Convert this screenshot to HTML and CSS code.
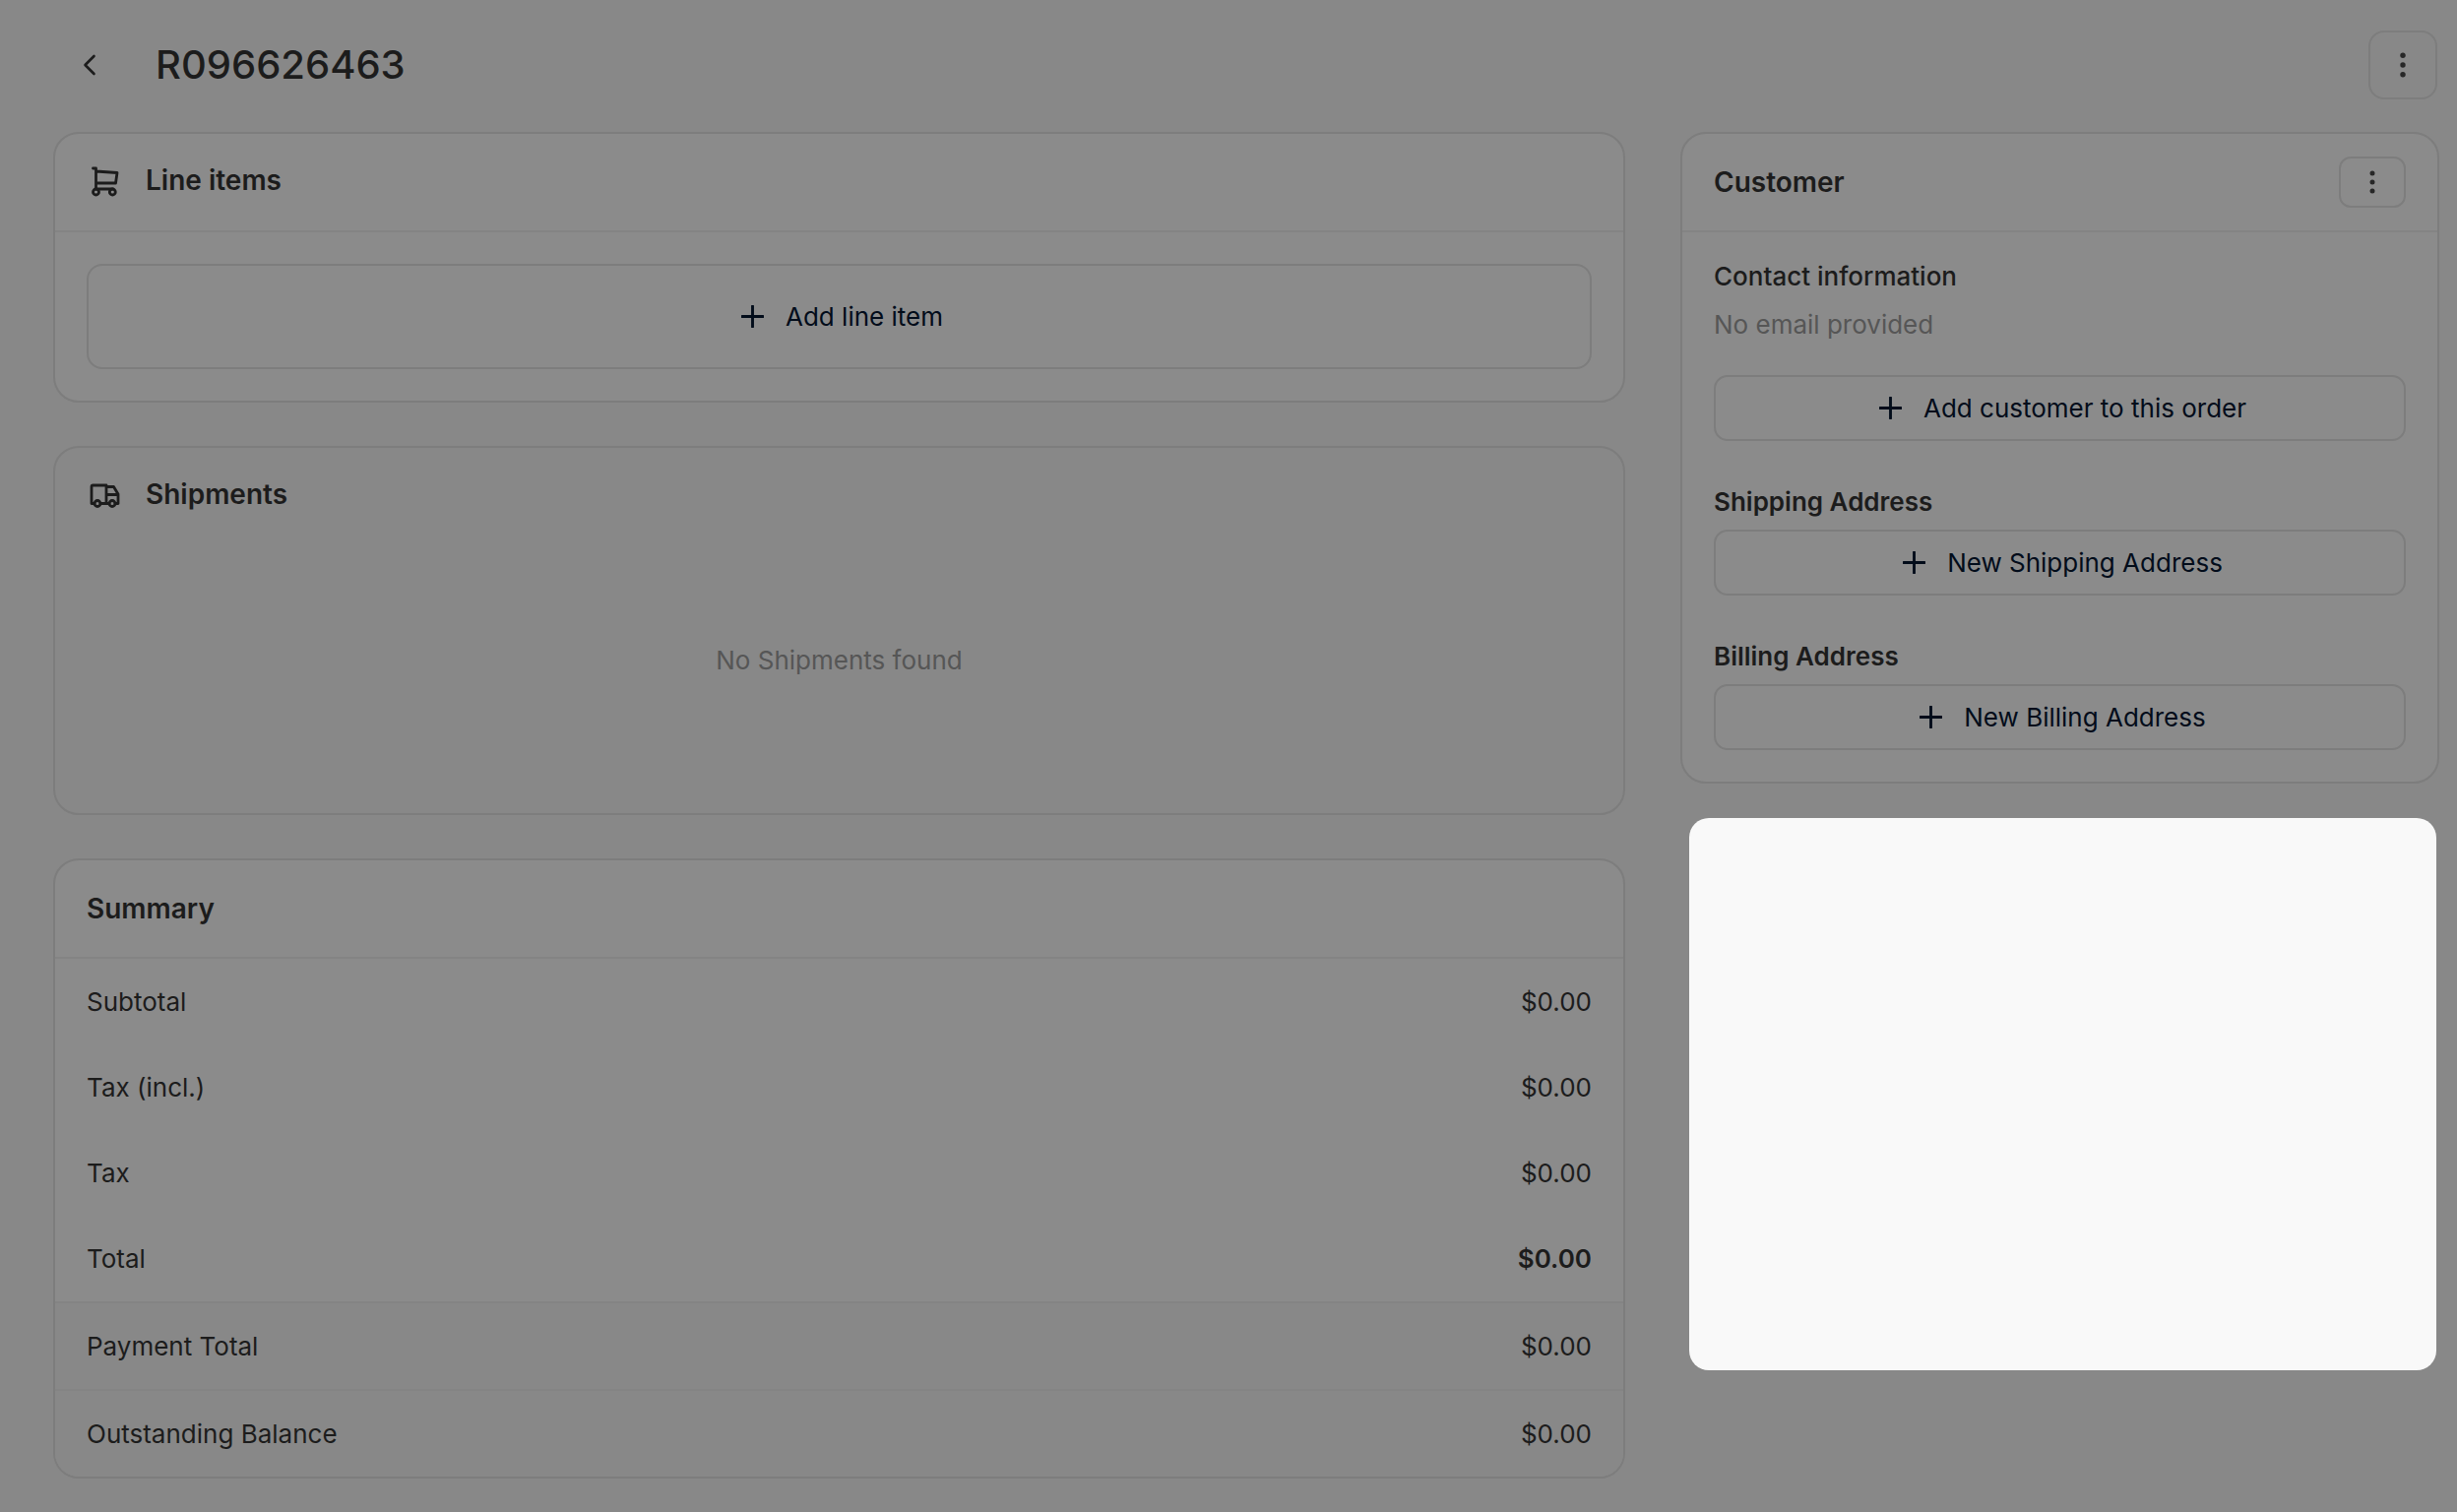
FILE: index.html
```html
<!DOCTYPE html>
<html lang="en">
<head>
<meta charset="utf-8">
<meta name="viewport" content="width=device-width, initial-scale=1">
<title>Order R096626463</title>
<link rel="stylesheet" href="styles.css">
</head>
<body>
<svg class="sprite" aria-hidden="true">
  <symbol id="plus" viewBox="0 0 24 24"><path d="M12 1v22M1 12h22" fill="none" stroke="currentColor" stroke-width="3" stroke-linecap="round"/></symbol>
  <symbol id="dots" viewBox="0 0 24 24"><g fill="currentColor"><circle cx="12" cy="3" r="2.5"/><circle cx="12" cy="12" r="2.5"/><circle cx="12" cy="21" r="2.5"/></g></symbol>
</svg>
<header class="page-header">
  <a class="back" href="#" aria-label="Back to orders">
    <svg width="14" height="22" viewBox="0 0 14 22"><path d="M11.500 2 2.500 11l9 9" fill="none" stroke="currentColor" stroke-width="2.600" stroke-linecap="round" stroke-linejoin="round"/></svg>
  </a>
  <h1 class="page-title">R096626463</h1>
  <button class="menu-button menu-button-large" type="button" aria-label="Order actions"><svg class="dots-large"><use href="#dots"/></svg></button>
</header>
<main class="columns">
  <div class="main-column">
    <section class="card">
      <header class="card-header card-header-icon">
        <svg class="card-icon" viewBox="0 0 36 36" fill="none" stroke="currentColor" stroke-width="2.800" stroke-linecap="round" stroke-linejoin="round"><path d="M6.500 6h3v21h17M9.500 9 31 10.500 29.500 21h-20"/><circle cx="9.500" cy="30" r="3"/><circle cx="26.300" cy="30" r="3"/></svg>
        <h2 class="card-title">Line items</h2>
      </header>
      <div class="card-body">
        <button class="add-button add-button-tall" type="button"><svg class="plus"><use href="#plus"/></svg>Add line item</button>
      </div>
    </section>
    <section class="card card-muted">
      <header class="card-header card-header-icon card-header-plain">
        <svg class="card-icon" viewBox="0 0 36 36" fill="none" stroke="currentColor" stroke-width="2.800" stroke-linecap="round" stroke-linejoin="round"><path d="M8 27.500H5V10.500Q5 9 6.500 9H20v18.500h-6M20 10.500h7.500L32 18v9.500h-3M20 27.500h3M20 18.500h12"/><circle cx="11" cy="27.500" r="3"/><circle cx="26" cy="27.500" r="3"/></svg>
        <h2 class="card-title">Shipments</h2>
      </header>
      <p class="empty">No Shipments found</p>
    </section>
    <section class="card">
      <header class="card-header">
        <h2 class="card-title">Summary</h2>
      </header>
      <table class="summary">
        <tbody>
          <tr><th scope="row">Subtotal</th><td>$0.00</td></tr>
          <tr><th scope="row">Tax (incl.)</th><td>$0.00</td></tr>
          <tr><th scope="row">Tax</th><td>$0.00</td></tr>
          <tr><th scope="row">Total</th><td class="grand-total">$0.00</td></tr>
        </tbody>
        <tfoot>
          <tr><th scope="row">Payment Total</th><td>$0.00</td></tr>
          <tr><th scope="row">Outstanding Balance</th><td>$0.00</td></tr>
        </tfoot>
      </table>
    </section>
  </div>
  <aside class="side-column">
    <section class="card">
      <header class="card-header card-header-split">
        <h2 class="card-title">Customer</h2>
        <button class="menu-button" type="button" aria-label="Customer actions"><svg class="dots"><use href="#dots"/></svg></button>
      </header>
      <div class="card-body customer">
        <div class="contact">
          <h3 class="label label-medium">Contact information</h3>
          <p class="hint">No email provided</p>
          <button class="add-button" type="button"><svg class="plus"><use href="#plus"/></svg>Add customer to this order</button>
        </div>
        <div class="address">
          <h3 class="label">Shipping Address</h3>
          <button class="add-button" type="button"><svg class="plus"><use href="#plus"/></svg>New Shipping Address</button>
        </div>
        <div class="address">
          <h3 class="label">Billing Address</h3>
          <button class="add-button" type="button"><svg class="plus"><use href="#plus"/></svg>New Billing Address</button>
        </div>
      </div>
    </section>
    <div class="spotlight"></div>
  </aside>
</main>
</body>
</html>
```

FILE: styles.css
```css
:root {
  --page: #888888;
  --surface: #8b8b8b;
  --border: #7d7d7d;
  --divider: #848484;
  --ink: #1c1c1c;
  --action: #020c1a;
  --muted: #565656;
}

* { box-sizing: border-box; }

body {
  margin: 0;
  min-height: 100vh;
  background: var(--page);
  color: var(--ink);
  font: 400 26px/40px Inter, "Liberation Sans", sans-serif;
}

h1, h2, h3, p { margin: 0; }
svg { display: block; flex: none; }
.sprite { display: none; }

.page-header {
  display: flex;
  align-items: center;
  padding: 31px 20px 33px 54px;
}

.back {
  display: flex;
  justify-content: center;
  width: 74px;
  color: var(--ink);
}

.page-title {
  margin-left: 30px;
  font-size: 40px;
  line-height: 48px;
  font-weight: 500;
}

.menu-button {
  display: flex;
  align-items: center;
  justify-content: center;
  width: 68px;
  height: 52px;
  padding: 0;
  border: 2px solid var(--border);
  border-radius: 12px;
  background: none;
  color: #272727;
}

.menu-button-large {
  width: 70px;
  height: 70px;
  margin-left: auto;
  border-radius: 16px;
}

.dots { width: 24px; height: 24px; }
.dots-large { width: 26px; height: 26px; }

.columns {
  display: grid;
  grid-template-columns: minmax(0, 1597fr) minmax(0, 771fr);
  gap: 56px;
  align-items: start;
  padding: 0 18px 34px 54px;
}

.main-column {
  display: flex;
  flex-direction: column;
  gap: 44px;
}

.card {
  border: 2px solid var(--border);
  border-radius: 26px;
  background: var(--surface);
  overflow: hidden;
}

.card-muted { background: var(--page); }

.card-header {
  display: flex;
  align-items: center;
  gap: 24px;
  height: 100px;
  padding: 0 32px;
  border-bottom: 2px solid var(--divider);
}

.card-header-icon { padding-bottom: 4px; }
.card-header-plain { border-bottom-color: transparent; }
.card-header-split { justify-content: space-between; }

.card-icon { width: 36px; height: 36px; }

.card-title {
  font-size: 28px;
  line-height: 40px;
  font-weight: 600;
}

.card-body { padding: 32px; }

.add-button {
  display: flex;
  align-items: center;
  justify-content: center;
  gap: 22px;
  width: 100%;
  height: 67px;
  padding: 0 0 0 6px;
  border: 2px solid var(--border);
  border-radius: 14px;
  background: none;
  color: var(--action);
  font: inherit;
}

.add-button-tall {
  height: 107px;
  border-radius: 16px;
}

.plus { width: 23px; height: 23px; }

.empty {
  padding: 96px 32px 135px;
  color: var(--muted);
  text-align: center;
}

.summary {
  width: 100%;
  border-collapse: separate;
  border-spacing: 0;
}

.summary th,
.summary td {
  height: 87px;
  padding: 0 32px;
  font-weight: 400;
}

.summary th { text-align: left; }
.summary td { text-align: right; }
.summary .grand-total { font-weight: 600; }
.summary tfoot { background: var(--page); }

.summary tfoot th,
.summary tfoot td {
  height: 89px;
  border-top: 2px solid var(--divider);
}

.customer {
  display: flex;
  flex-direction: column;
  gap: 42px;
  padding-top: 25px;
}

.hint {
  margin: 9px 0 31px;
  color: var(--muted);
}

.label {
  font-size: 26px;
  line-height: 40px;
  font-weight: 600;
}

.label-medium { font-weight: 500; }
.address .label { margin-bottom: 8px; }

.spotlight {
  height: 561px;
  margin: 35px 3px 0 9px;
  border-radius: 20px;
  background: #f9f9f9;
}
```
